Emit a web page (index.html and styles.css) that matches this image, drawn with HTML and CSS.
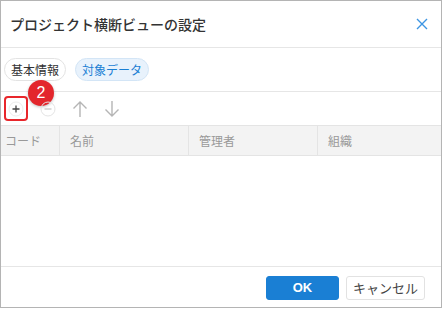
FILE: index.html
```html
<!DOCTYPE html>
<html lang="ja">
<head>
  <meta charset="UTF-8" />
  <title>プロジェクト横断ビューの設定</title>
  <link rel="stylesheet" href="styles.css">
</head>
<body>

  <div class="dialog">
    <div class="header">
      <h1 class="title">プロジェクト横断ビューの設定</h1>
      <button class="close" aria-label="閉じる">
        <svg width="12" height="12" viewBox="0 0 12 12"><path d="M1 1L11 11M11 1L1 11" stroke="#3d95e3" stroke-width="1.4" fill="none"/></svg>
      </button>
    </div>

    <div class="tabs">
      <span class="tab">基本情報</span>
      <span class="tab active">対象データ</span>
    </div>

    <div class="toolbar">
      <span class="tool add highlight">
        <svg width="16" height="16" viewBox="0 0 16 16"><circle cx="8" cy="8" r="7" fill="none" stroke="#ececec"/><path d="M8 4.5V11.5M4.5 8H11.5" stroke="#444" stroke-width="1.3"/></svg>
        <span class="badge">2</span>
      </span>
      <span class="tool">
        <svg width="16" height="16" viewBox="0 0 16 16"><circle cx="8" cy="8" r="7" fill="none" stroke="#e4e4e4"/><path d="M4.5 8H11.5" stroke="#c8c8c8" stroke-width="1.3"/></svg>
      </span>
      <span class="tool">
        <svg width="16" height="18" viewBox="0 0 16 18"><path d="M8 2V17M1.5 8.5L8 2L14.5 8.5" stroke="#b5b5b5" stroke-width="1.4" fill="none"/></svg>
      </span>
      <span class="tool">
        <svg width="16" height="18" viewBox="0 0 16 18"><path d="M8 1V16M1.5 9.5L8 16L14.5 9.5" stroke="#b5b5b5" stroke-width="1.4" fill="none"/></svg>
      </span>
    </div>

    <div class="table">
      <div class="thead">
        <div class="th col-code">コード</div>
        <div class="th col-name">名前</div>
        <div class="th col-admin">管理者</div>
        <div class="th col-org">組織</div>
      </div>
      <div class="tbody"></div>
    </div>

    <div class="footer">
      <button class="btn primary">OK</button>
      <button class="btn">キャンセル</button>
    </div>
  </div>

</body>
</html>
```

FILE: styles.css
```css
* {
  box-sizing: border-box;
  margin: 0;
  padding: 0;
}

body {
  font-family: "Noto Sans CJK JP", "Noto Sans", sans-serif;
  background: #ffffff;
  color: #333;
}

.dialog {
  width: 442px;
  height: 308px;
  border: 1px solid #b4b4b4;
  display: flex;
  flex-direction: column;
  background: #fff;
}

.header {
  height: 47px;
  display: flex;
  align-items: center;
  justify-content: space-between;
  padding: 0 8px 0 9px;
  border-bottom: 1px solid #e6e6e6;
}

.title {
  font-size: 14px;
  font-weight: 500;
  color: #333;
}

.close {
  border: none;
  background: none;
  width: 22px;
  height: 22px;
  display: flex;
  align-items: center;
  justify-content: center;
}

.tabs {
  height: 44px;
  display: flex;
  align-items: center;
  gap: 9px;
  padding: 0 3px;
  border-bottom: 1px solid #e6e6e6;
}

.tab {
  height: 23px;
  line-height: 21px;
  padding: 0 6px;
  font-size: 12px;
  border: 1px solid #e3e3e3;
  border-radius: 12px;
  color: #333;
  background: #fff;
}

.tab.active {
  color: #1a7fd4;
  background: #e8f2fc;
  border-color: #d3e5f6;
}

.toolbar {
  height: 33px;
  display: flex;
  align-items: center;
  gap: 8px;
  padding: 0 3px;
}

.tool {
  width: 24px;
  height: 25px;
  display: flex;
  align-items: center;
  justify-content: center;
  position: relative;
}

.tool.highlight {
  border: 2px solid #e8262b;
  border-radius: 4px;
}

.badge {
  position: absolute;
  left: 22px;
  top: -18px;
  width: 26px;
  height: 26px;
  border-radius: 50%;
  background: #e3262c;
  color: #fff;
  font-family: "Liberation Sans", sans-serif;
  font-size: 16px;
  line-height: 26px;
  text-align: center;
  box-shadow: 0 1px 3px rgba(0, 0, 0, 0.25);
}

.table {
  flex: 1;
  display: flex;
  flex-direction: column;
  border-bottom: 1px solid #e6e6e6;
}

.thead {
  height: 31px;
  display: flex;
  background: #f3f3f3;
  border-top: 1px solid #e4e4e4;
  border-bottom: 1px solid #e4e4e4;
}

.th {
  font-size: 12px;
  color: #999;
  line-height: 29px;
  padding-left: 10px;
  border-right: 1px solid #e4e4e4;
}

.col-code {
  width: 59px;
  padding-left: 4px;
}

.col-name {
  width: 129px;
}

.col-admin {
  width: 129px;
}

.col-org {
  flex: 1;
  border-right: none;
}

.tbody {
  flex: 1;
}

.footer {
  height: 40px;
  display: flex;
  align-items: center;
  justify-content: flex-end;
  gap: 7px;
  padding: 1px 16px 0 0;
}

.btn {
  height: 24px;
  font-family: "Noto Sans CJK JP", sans-serif;
  font-size: 13px;
  color: #444;
  background: #fff;
  border: 1px solid #e2e2e2;
  border-radius: 3px;
  padding: 0 6px;
}

.btn.primary {
  background: #1a7fd4;
  border-color: #1a7fd4;
  color: #fff;
  width: 73px;
  font-family: "Liberation Sans", sans-serif;
  font-weight: bold;
}
```
